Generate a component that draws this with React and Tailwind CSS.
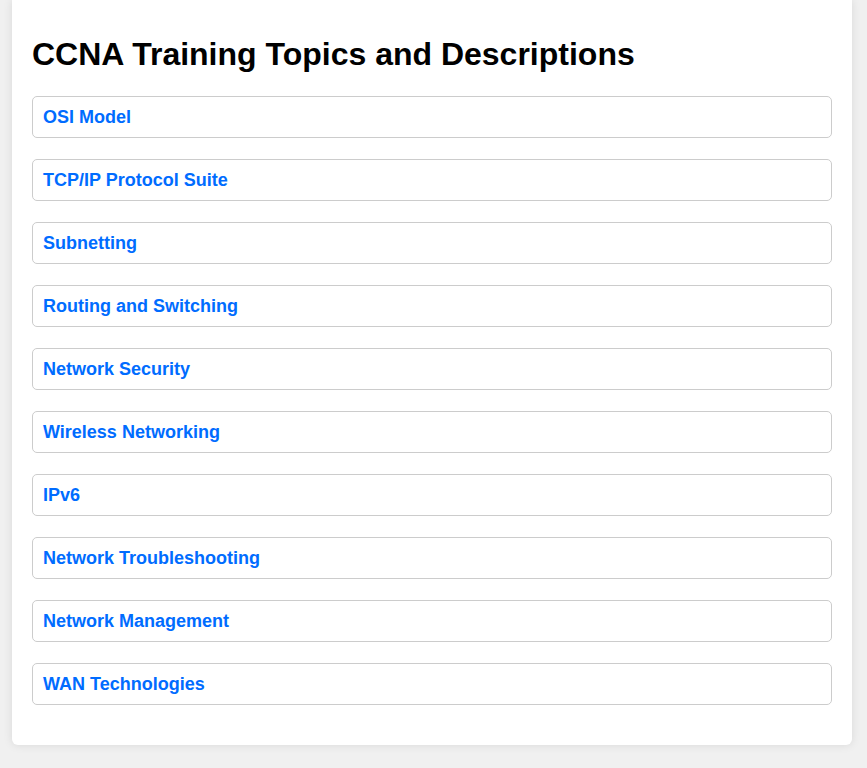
import React from "react";

const topics = [
  "OSI Model",
  "TCP/IP Protocol Suite",
  "Subnetting",
  "Routing and Switching",
  "Network Security",
  "Wireless Networking",
  "IPv6",
  "Network Troubleshooting",
  "Network Management",
  "WAN Technologies",
];

export default function App() {
  return (
    <div
      className="min-h-screen bg-[#f0f0f0] pb-[23px]"
      style={{ fontFamily: '"Liberation Sans", Arial, sans-serif' }}
    >
      <div className="ml-[12px] w-[840px] bg-white rounded-b-[6px] shadow-[0_0_10px_rgba(0,0,0,0.1)] px-[20px] pt-[36px] pb-[19px]">
        <h1 className="text-[32px] leading-[37px] font-bold text-black mb-[23px]">
          CCNA Training Topics and Descriptions
        </h1>
        <div className="flex flex-col gap-[21px]">
          {topics.map((t) => (
            <div
              key={t}
              className="border border-[#cccccc] rounded-[5px] px-[10px] py-[10px]"
            >
              <div className="text-[18px] leading-[20px] font-bold text-[#006cff]">
                {t}
              </div>
            </div>
          ))}
        </div>
        <div className="h-[21px]" />
      </div>
    </div>
  );
}
